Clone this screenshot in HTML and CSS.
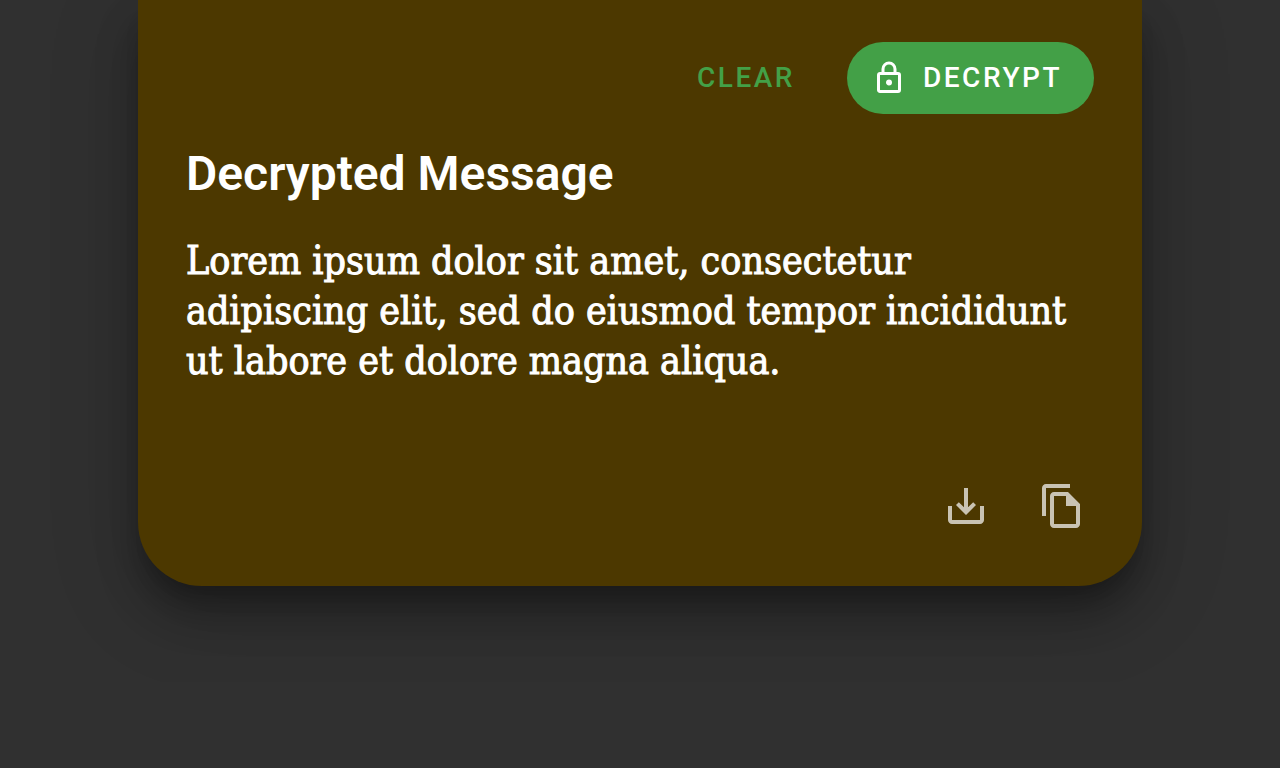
FILE: index.html
```html
<!DOCTYPE html>
<html lang="en">
<head>
<meta charset="utf-8">
<meta name="viewport" content="width=device-width, initial-scale=1">
<title>Decrypt</title>
<link rel="stylesheet" href="styles.css">
</head>
<body>
<main class="card">
  <div class="actions">
    <button class="btn btn-text" type="button">CLEAR</button>
    <button class="btn btn-filled" type="button">
      <svg class="btn-icon" viewBox="0 0 24 24" aria-hidden="true"><path d="M12,17C10.89,17 10,16.1 10,15C10,13.89 10.89,13 12,13A2,2 0 0,1 14,15A2,2 0 0,1 12,17M18,20V10H6V20H18M18,8A2,2 0 0,1 20,10V20A2,2 0 0,1 18,22H6C4.89,22 4,21.1 4,20V10C4,8.89 4.89,8 6,8H7V6A5,5 0 0,1 12,1A5,5 0 0,1 17,6V8H18M12,3A3,3 0 0,0 9,6V8H15V6A3,3 0 0,0 12,3Z"/></svg>
      <span>DECRYPT</span>
    </button>
  </div>
  <section class="result">
    <h2 class="title">Decrypted Message</h2>
    <p class="message">Lorem ipsum dolor sit amet, consectetur adipiscing elit, sed do eiusmod tempor incididunt ut labore et dolore magna aliqua.</p>
  </section>
  <div class="tools">
    <button class="icon-btn" type="button" aria-label="Download">
      <svg viewBox="0 0 24 24" aria-hidden="true"><path d="M19 12v7H5v-7H3v7c0 1.1.9 2 2 2h14c1.1 0 2-.9 2-2v-7h-2zm-6 .67l2.59-2.58L17 11.5l-5 5-5-5 1.41-1.41L11 12.67V3h2z"/></svg>
    </button>
    <button class="icon-btn" type="button" aria-label="Copy">
      <svg viewBox="0 0 24 24" aria-hidden="true"><path d="M16 1H4c-1.1 0-2 .9-2 2v14h2V3h12V1zm-1 4H8c-1.1 0-1.99.9-1.99 2L6 21c0 1.1.89 2 1.99 2H19c1.1 0 2-.9 2-2V11l-6-6zM8 21V7h6v5h5v9H8z"/></svg>
    </button>
  </div>
</main>
</body>
</html>
```
FILE: styles.css
```css
* {
  box-sizing: border-box;
}

body {
  margin: 0;
  padding: 0 24px 96px;
  background: #303030;
  color: #fff;
  font-family: Roboto, sans-serif;
}

.card {
  max-width: 1004px;
  margin: 0 auto;
  padding: 42px 48px 32px;
  border-radius: 0 0 64px 64px;
  background: #4c3800;
  box-shadow:
    0 16px 20px -8px rgba(0, 0, 0, 0.2),
    0 28px 40px 0 rgba(0, 0, 0, 0.26),
    0 20px 88px 8px rgba(0, 0, 0, 0.14);
}

.actions {
  display: flex;
  justify-content: flex-end;
  gap: 20px;
}

.btn {
  display: flex;
  align-items: center;
  gap: 16px;
  height: 72px;
  padding: 0 32px;
  border: 0;
  border-radius: 36px;
  font: 500 28px/36px Roboto, sans-serif;
  letter-spacing: 0.09em;
  cursor: pointer;
}

.btn-text {
  background: transparent;
  color: #43a047;
}

.btn-filled {
  padding-left: 24px;
  background: #43a047;
  color: #fff;
}

.btn-icon {
  width: 36px;
  height: 36px;
  fill: currentColor;
}

.title {
  margin: 28px 0 30px;
  font-size: 48px;
  line-height: 64px;
  font-weight: 600;
}

.message {
  min-height: 222px;
  margin: 0;
  font-family: "Roboto Slab", "DejaVu Serif Condensed", "DejaVu Serif", serif;
  font-size: 39px;
  line-height: 50px;
  -webkit-text-stroke: 1px currentColor;
}

.tools {
  display: flex;
  justify-content: flex-end;
  margin-right: -16px;
}

.icon-btn {
  display: grid;
  place-items: center;
  width: 96px;
  height: 96px;
  padding: 0;
  border: 0;
  border-radius: 50%;
  background: transparent;
  color: rgba(255, 255, 255, 0.7);
  cursor: pointer;
}

.icon-btn svg {
  width: 48px;
  height: 48px;
  fill: currentColor;
}
```
